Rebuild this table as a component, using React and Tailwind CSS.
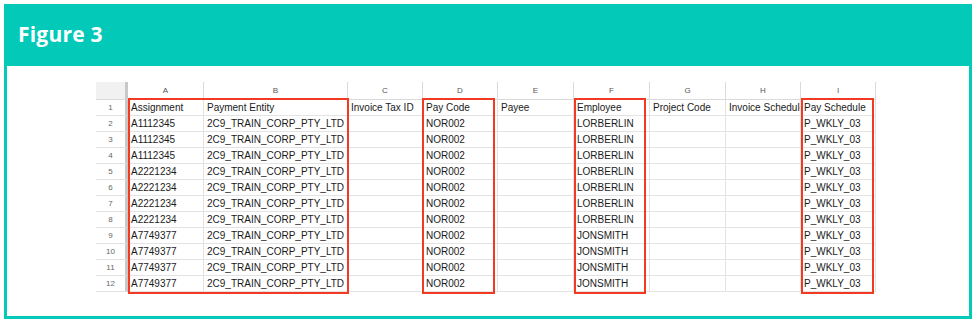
const columns = [
  { key: "", width: 32 },
  { key: "A", width: 76 },
  { key: "B", width: 144 },
  { key: "C", width: 75 },
  { key: "D", width: 75 },
  { key: "E", width: 76 },
  { key: "F", width: 76 },
  { key: "G", width: 76 },
  { key: "H", width: 75 },
  { key: "I", width: 75 },
]

const header = ["Assignment", "Payment Entity", "Invoice Tax ID", "Pay Code", "Payee", "Employee", "Project Code", "Invoice Schedule", "Pay Schedule"]

const assignments = ["A1112345", "A1112345", "A1112345", "A2221234", "A2221234", "A2221234", "A2221234", "A7749377", "A7749377", "A7749377", "A7749377"]

const rows = [
  header,
  ...assignments.map((a, i) => [
    a,
    "2C9_TRAIN_CORP_PTY_LTD",
    "",
    "NOR002",
    "",
    i < 7 ? "LORBERLIN" : "JONSMITH",
    "",
    "",
    "P_WKLY_03",
  ]),
]

// red highlight boxes, x relative to the sheet's left edge
const highlights = [
  { left: 32, width: 221 },
  { left: 326, width: 73 },
  { left: 478, width: 72 },
  { left: 705, width: 73 },
]

function Sheet() {
  const template = columns.map((c) => c.width + "px").join(" ")
  return (
    <div className="relative w-max">
      <div className="grid" style={{ gridTemplateColumns: template }}>
        {columns.map((c, i) => (
          <div
            key={"h" + i}
            className={
              "h-[18px] flex items-center justify-center text-[8px] text-[#555] border-b border-[#dadada] " +
              (i === 0 ? "bg-[#f1f1f1] border-r-[3px] border-r-[#c8c8c8]" : "bg-white border-r border-r-[#dadada]")
            }
          >
            {c.key}
          </div>
        ))}
        {rows.map((row, r) => (
          <Row key={r} index={r + 1} cells={row} />
        ))}
      </div>
      {highlights.map((h, i) => (
        <div
          key={i}
          className="absolute top-[16px] h-[196px] border-2 border-[#f23a22] pointer-events-none"
          style={{ left: h.left, width: h.width }}
        />
      ))}
    </div>
  )
}

function Row({ index, cells }) {
  return (
    <>
      <div className="h-[16px] flex items-center justify-center text-[8px] text-[#666] bg-white border-b border-[#e3e3e3] border-r-[3px] border-r-[#c8c8c8]">
        {index}
      </div>
      {cells.map((cell, i) => (
        <div
          key={i}
          className="h-[16px] flex items-center pl-[3px] text-[10px] text-[#1a1a1a] whitespace-nowrap overflow-hidden border-b border-r border-[#e3e3e3]"
        >
          {cell}
        </div>
      ))}
    </>
  )
}

export default function App() {
  return (
    <div className="w-[976px] h-[325px] bg-white pt-[4px] px-[4px] pb-[6px] font-['Liberation_Sans',Arial,sans-serif]">
      <div className="h-full flex flex-col border-[3px] border-t-0 border-[#03c9b8]">
        <div className="h-[62px] bg-[#03c9b8] -mx-[3px] flex items-center pl-[14px]">
          <h1 className="text-white text-[21px] font-bold font-['Open_Sans',sans-serif] tracking-[0.2px]">Figure 3</h1>
        </div>
        <div className="flex-1 bg-white pt-[16px] pl-[89px]">
          <Sheet />
        </div>
      </div>
    </div>
  )
}
